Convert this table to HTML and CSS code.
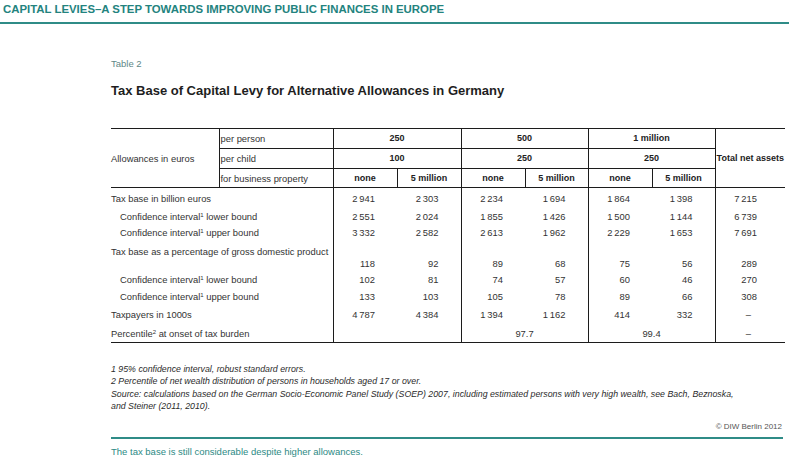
FILE: index.html
```html
<!DOCTYPE html>
<html lang="en">
<head>
<meta charset="utf-8">
<title>Tax Base of Capital Levy</title>
<link rel="stylesheet" href="styles.css">
</head>
<body>
<header class="running-head">CAPITAL LEVIES–A STEP TOWARDS IMPROVING PUBLIC FINANCES IN EUROPE</header>
<main class="content">
  <p class="table-label">Table 2</p>
  <h1 class="table-title">Tax Base of Capital Levy for Alternative Allowances in Germany</h1>
  <table class="data">
    <colgroup>
      <col class="c-a"><col class="c-b">
      <col class="c-n"><col class="c-n"><col class="c-n"><col class="c-n2"><col class="c-n"><col class="c-n2">
      <col class="c-t">
    </colgroup>
    <thead>
      <tr class="hr1">
        <td rowspan="3" class="allow">Allowances in euros</td>
        <td class="sub">per person</td>
        <th colspan="2" class="g">250</th>
        <th colspan="2" class="g">500</th>
        <th colspan="2" class="g">1 million</th>
        <th rowspan="3" class="g total-head">Total net assets</th>
      </tr>
      <tr class="hr2">
        <td class="sub">per child</td>
        <th colspan="2" class="g">100</th>
        <th colspan="2" class="g">250</th>
        <th colspan="2" class="g">250</th>
      </tr>
      <tr class="hr3">
        <td class="sub">for business property</td>
        <th class="g">none</th><th class="g">5 million</th>
        <th class="g">none</th><th class="g">5 million</th>
        <th class="g">none</th><th class="g">5 million</th>
      </tr>
    </thead>
    <tbody>
      <tr class="r1">
        <td colspan="2" class="lbl">Tax base in billion euros</td>
        <td class="n g">2&thinsp;941</td><td class="n">2&thinsp;303</td>
        <td class="n g">2&thinsp;234</td><td class="n">1&thinsp;694</td>
        <td class="n g">1&thinsp;864</td><td class="n">1&thinsp;398</td>
        <td class="n g t">7&thinsp;215</td>
      </tr>
      <tr class="r2">
        <td colspan="2" class="lbl ind">Confidence interval<sup>1</sup> lower bound</td>
        <td class="n g">2&thinsp;551</td><td class="n">2&thinsp;024</td>
        <td class="n g">1&thinsp;855</td><td class="n">1&thinsp;426</td>
        <td class="n g">1&thinsp;500</td><td class="n">1&thinsp;144</td>
        <td class="n g t">6&thinsp;739</td>
      </tr>
      <tr class="r3">
        <td colspan="2" class="lbl ind">Confidence interval<sup>1</sup> upper bound</td>
        <td class="n g">3&thinsp;332</td><td class="n">2&thinsp;582</td>
        <td class="n g">2&thinsp;613</td><td class="n">1&thinsp;962</td>
        <td class="n g">2&thinsp;229</td><td class="n">1&thinsp;653</td>
        <td class="n g t">7&thinsp;691</td>
      </tr>
      <tr class="r4">
        <td colspan="2" class="lbl">Tax base as a percentage of gross domestic product</td>
        <td class="g"></td><td></td><td class="g"></td><td></td><td class="g"></td><td></td><td class="g"></td>
      </tr>
      <tr class="r5">
        <td colspan="2"></td>
        <td class="n g">118</td><td class="n">92</td>
        <td class="n g">89</td><td class="n">68</td>
        <td class="n g">75</td><td class="n">56</td>
        <td class="n g t">289</td>
      </tr>
      <tr class="r6">
        <td colspan="2" class="lbl ind">Confidence interval<sup>1</sup> lower bound</td>
        <td class="n g">102</td><td class="n">81</td>
        <td class="n g">74</td><td class="n">57</td>
        <td class="n g">60</td><td class="n">46</td>
        <td class="n g t">270</td>
      </tr>
      <tr class="r7">
        <td colspan="2" class="lbl ind">Confidence interval<sup>1</sup> upper bound</td>
        <td class="n g">133</td><td class="n">103</td>
        <td class="n g">105</td><td class="n">78</td>
        <td class="n g">89</td><td class="n">66</td>
        <td class="n g t">308</td>
      </tr>
      <tr class="r8">
        <td colspan="2" class="lbl">Taxpayers in 1000s</td>
        <td class="n g">4&thinsp;787</td><td class="n">4&thinsp;384</td>
        <td class="n g">1&thinsp;394</td><td class="n">1&thinsp;162</td>
        <td class="n g">414</td><td class="n">332</td>
        <td class="g dash">–</td>
      </tr>
      <tr class="r9">
        <td colspan="2" class="lbl">Percentile<sup>2</sup> at onset of tax burden</td>
        <td colspan="2" class="g"></td>
        <td colspan="2" class="g c">97.7</td>
        <td colspan="2" class="g c">99.4</td>
        <td class="g dash">–</td>
      </tr>
    </tbody>
  </table>
  <div class="notes">
    <p>1 95% confidence interval, robust standard errors.</p>
    <p>2 Percentile of net wealth distribution of persons in households aged 17 or over.</p>
    <p>Source: calculations based on the German Socio-Economic Panel Study (SOEP) 2007, including estimated persons with very high wealth, see Bach, Beznoska,<br>and Steiner (2011, 2010).</p>
  </div>
  <p class="copyright">© DIW Berlin 2012</p>
  <p class="caption">The tax base is still considerable despite higher allowances.</p>
</main>
</body>
</html>
```
FILE: styles.css
```css
html, body {
  margin: 0;
  padding: 0;
  background: #ffffff;
}
body {
  font-family: "Liberation Sans", Arial, sans-serif;
  color: #2b2b2b;
  width: 789px;
}
.running-head {
  box-sizing: border-box;
  height: 24px;
  padding: 2px 0 0 3px;
  font-size: 11.4px;
  line-height: 14px;
  font-weight: bold;
  color: #23837e;
  border-bottom: 2px solid #2f8c87;
  white-space: nowrap;
}
.content {
  margin-left: 111px;
  width: 674px;
}
.table-label {
  margin: 34px 0 0;
  font-size: 9.5px;
  line-height: 12px;
  color: #5f8887;
}
.table-title {
  margin: 13px 0 0;
  font-size: 13px;
  line-height: 16px;
  font-weight: bold;
  color: #1e1e1e;
}
.data {
  margin-top: 29px;
  width: 674px;
  table-layout: fixed;
  border-collapse: collapse;
  border-top: 1px solid #1c1c1c;
  border-bottom: 1px solid #1c1c1c;
  font-size: 9.4px;
  line-height: 11px;
  color: #333;
}
.c-a { width: 108px; }
.c-b { width: 114px; }
.c-n { width: 64px; }
.c-n2 { width: 63px; }
.c-t { width: 70px; }
.data td, .data th {
  padding: 0;
  white-space: nowrap;
  vertical-align: middle;
}
.data th {
  font-weight: bold;
  font-size: 9px;
  text-align: center;
  color: #222;
}
.data thead tr { height: 20px; }
.data thead .hr3 { height: 19px; }
.data .g { border-left: 1px solid #1c1c1c; }
.data .sub {
  border-left: 1px solid #1c1c1c;
  padding-left: 1px;
}
.data .hr1 .sub, .data .hr1 th:not(.total-head),
.data .hr2 .sub, .data .hr2 th {
  border-bottom: 1px solid #1c1c1c;
}
.data .hr3 td, .data .hr3 th, .data .allow, .data .total-head {
  border-bottom: 1px solid #1c1c1c;
}
.data .allow { text-align: left; }
.data .total-head { font-size: 9px; }

.data tbody td {
  vertical-align: top;
  padding-top: 5px;
}
.data .r1 { height: 18px; }
.data .r2 { height: 16px; }
.data .r3 { height: 19px; }
.data .r4 { height: 16px; }
.data .r5 { height: 12px; }
.data .r5 td { padding-top: 1px; }
.data .r6 { height: 17px; }
.data .r7 { height: 18px; }
.data .r8 { height: 19px; }
.data .r9 { height: 20px; }

.data .lbl { text-align: left; }
.data .ind { padding-left: 9px; }
.data .n {
  text-align: right;
  padding-right: 22px;
}
.data .n.t { padding-right: 28px; }
.data .dash {
  text-align: center;
  padding-right: 4px;
}
.data .c { text-align: center; }
.data sup {
  font-size: 6px;
  line-height: 0;
  vertical-align: 3px;
}
.notes {
  margin-top: 20px;
  font-size: 8.8px;
  line-height: 12.4px;
  font-style: italic;
  color: #2b2b2b;
}
.notes p { margin: 0; }
.copyright {
  margin: 9px 0 0;
  padding-right: 3px;
  text-align: right;
  font-size: 8px;
  line-height: 10px;
  color: #555;
}
.caption {
  margin: 5px 0 0;
  padding-top: 7px;
  border-top: 2px solid #2f8c87;
  font-size: 9.5px;
  line-height: 12px;
  color: #2d8a85;
  width: 672px;
}
```
